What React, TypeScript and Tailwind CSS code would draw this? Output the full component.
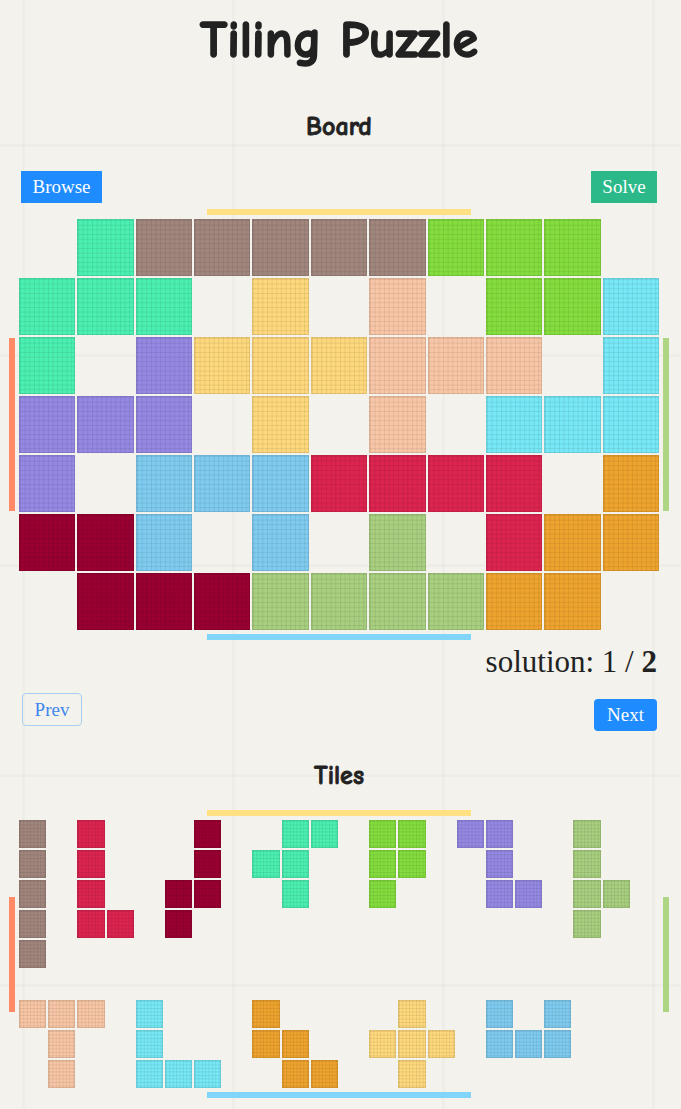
import React from "react";

const COLORS: Record<string, string> = {
  t: "bg-[#4bf0b0]",
  b: "bg-[#a0867d]",
  l: "bg-[#84dd3e]",
  y: "bg-[#fed87c]",
  p: "bg-[#f8c6a6]",
  c: "bg-[#77e8f6]",
  v: "bg-[#9488e2]",
  u: "bg-[#7fcbf0]",
  r: "bg-[#dc2450]",
  o: "bg-[#eea32e]",
  m: "bg-[#990031]",
  g: "bg-[#a8cf7f]",
};

const BOARD = [
  ".tbbbbblll.",
  "ttt.y.p.llc",
  "t.vyyyppp.c",
  "vvv.y.p.ccc",
  "v.uuurrrr.o",
  "mmu.u.g.roo",
  ".mmmggggoo.",
];

const TILES = [
  "b.r...m..tt.ll.vv..g..",
  "b.r...m.tt..ll..v..g..",
  "b.r..mm..t..l...vv.gg.",
  "b.rr.m.............g..",
  "b.....................",
  "......................",
  "ppp.c...o....y..u.u...",
  ".p..c...oo..yyy.uuu...",
  ".p..ccc..oo..y........",
];

const TEX_BIG =
  "bg-[linear-gradient(rgba(0,0,0,0.08)_1px,transparent_1px),linear-gradient(90deg,rgba(0,0,0,0.08)_1px,transparent_1px)] bg-size-[4.67px_4.67px]";
const TEX_SMALL =
  "bg-[linear-gradient(rgba(0,0,0,0.08)_1px,transparent_1px),linear-gradient(90deg,rgba(0,0,0,0.08)_1px,transparent_1px)] bg-size-[3.4px_3.5px]";

function Cell({ k, small }: { k: string; small?: boolean }) {
  if (k === ".") return <div />;
  return (
    <div
      className={`${COLORS[k]} ${small ? TEX_SMALL : TEX_BIG} border border-black/10`}
    />
  );
}

function Framed({
  children,
  vbar,
}: {
  children: React.ReactNode;
  vbar: string;
}) {
  return (
    <div className="flex flex-col items-center gap-[4px]">
      <div className="w-[264px] h-[6px] bg-[#ffe082]" />
      <div className="flex items-center gap-[4px]">
        <div className={`w-[6px] ${vbar} bg-[#ff8a65]`} />
        {children}
        <div className={`w-[6px] ${vbar} bg-[#aed581]`} />
      </div>
      <div className="w-[264px] h-[6px] bg-[#81d4fa]" />
    </div>
  );
}

export default function App() {
  const comic = "font-['Comic_Sans_MS','Comic_Neue',Lato,'Noto_Sans',sans-serif]";
  const serif = "font-['Liberation_Serif','Times_New_Roman',serif]";
  return (
    <div className="min-h-screen w-full bg-[#f3f2ec] bg-[linear-gradient(90deg,rgba(0,0,0,0.018)_3px,transparent_3px),linear-gradient(rgba(0,0,0,0.018)_3px,transparent_3px)] bg-size-[210px_210px] bg-position-[22px_144px] text-[#222]">
      <div className="ml-[9px] w-[660px] flex flex-col pb-[11px]">
        <h1
          className={`${comic} mt-[14px] text-center text-[52px] leading-[52px] font-bold text-[#222] [-webkit-text-stroke:1.6px_#222]`}
        >
          Tiling Puzzle
        </h1>
        <h2
          className={`${comic} mt-[49px] text-center text-[26px] leading-[25px] font-bold [-webkit-text-stroke:0.8px_#222]`}
        >
          Board
        </h2>
        <div className={`${serif} mt-[31px] flex justify-between px-[12px]`}>
          <button className="w-[81px] h-[32px] bg-[#1e8bff] text-white text-[19px] leading-[32px] text-center">
            Browse
          </button>
          <button className="w-[66px] h-[32px] bg-[#2bb98a] text-white text-[19px] leading-[32px] text-center">
            Solve
          </button>
        </div>
        <div className="mt-[6px]">
          <Framed vbar="h-[173px]">
            <div className="grid grid-cols-[repeat(11,minmax(0,1fr))] grid-rows-[repeat(7,minmax(0,1fr))] gap-[2px] w-[640px] h-[411px]">
              {BOARD.flatMap((row, r) =>
                row.split("").map((k, c) => <Cell key={`${r}-${c}`} k={k} />)
              )}
            </div>
          </Framed>
        </div>
        <div
          className={`${serif} mt-[6px] pr-[12px] text-right text-[31px] leading-[31px] text-[#222]`}
        >
          solution: 1 / <span className="font-bold">2</span>
        </div>
        <div className={`${serif} mt-[16px] flex justify-between items-start px-[12px]`}>
          <button className="ml-[1px] w-[60px] h-[33px] border border-[#a9cdf2] rounded-[4px] text-[#3f86f0] text-[19px] leading-[31px] text-center">
            Prev
          </button>
          <button className="mt-[6px] w-[63px] h-[32px] rounded-[4px] bg-[#1e8bff] text-white text-[19px] leading-[32px] text-center">
            Next
          </button>
        </div>
        <h2
          className={`${comic} mt-[33px] text-center text-[26px] leading-[25px] font-bold [-webkit-text-stroke:0.8px_#222]`}
        >
          Tiles
        </h2>
        <div className="mt-[21px]">
          <Framed vbar="h-[115px]">
            <div className="grid grid-cols-[repeat(22,minmax(0,1fr))] grid-rows-[repeat(9,minmax(0,1fr))] gap-[2px] w-[640px] h-[268px]">
              {TILES.flatMap((row, r) =>
                row.split("").map((k, c) => (
                  <Cell key={`${r}-${c}`} k={k} small />
                ))
              )}
            </div>
          </Framed>
        </div>
      </div>
    </div>
  );
}
